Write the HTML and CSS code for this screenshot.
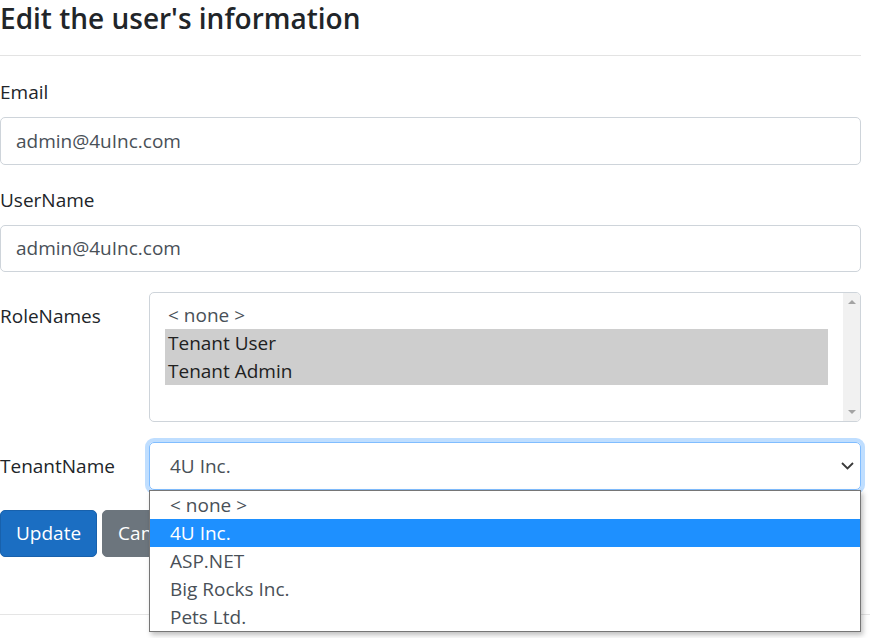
FILE: index.html
```html
<!DOCTYPE html>
<html lang="en">
<head>
<meta charset="utf-8">
<title>Edit user</title>
<link rel="stylesheet" href="styles.css">
</head>
<body>
<main class="page">
  <h4 class="title">Edit the user's information</h4>
  <hr class="rule">
  <form class="form">
    <div class="group">
      <label class="label">Email</label>
      <div class="control">admin@4uInc.com</div>
    </div>
    <div class="group">
      <label class="label">UserName</label>
      <div class="control">admin@4uInc.com</div>
    </div>
    <div class="group row">
      <label class="row-label">RoleNames</label>
      <div class="multi">
        <div class="multi-list">
          <div class="opt">&lt; none &gt;</div>
          <div class="opt sel">Tenant User</div>
          <div class="opt sel">Tenant Admin</div>
          <div class="opt"></div>
        </div>
        <div class="scrollbar">
          <span class="arrow up"></span>
          <span class="arrow down"></span>
        </div>
      </div>
    </div>
    <div class="group row">
      <label class="row-label">TenantName</label>
      <div class="select-wrap">
        <div class="select">
          <span>4U Inc.</span>
          <svg class="chev" width="13" height="8" viewBox="0 0 13 8"><polyline points="1,1 6.5,6.5 12,1" fill="none" stroke="#3a3a3a" stroke-width="1.8"/></svg>
        </div>
        <div class="dropdown">
          <div class="dopt">&lt; none &gt;</div>
          <div class="dopt active">4U Inc.</div>
          <div class="dopt">ASP.NET</div>
          <div class="dopt">Big Rocks Inc.</div>
          <div class="dopt">Pets Ltd.</div>
        </div>
      </div>
    </div>
    <div class="actions">
      <button type="button" class="btn primary">Update</button>
      <button type="button" class="btn secondary">Cancel</button>
    </div>
  </form>
</main>
<footer class="footer"></footer>
</body>
</html>
```
FILE: styles.css
```css
html, body {
  margin: 0;
  padding: 0;
  background: #ffffff;
}
body {
  font-family: "Open Sans", "Noto Sans", sans-serif;
  font-size: 19px;
  line-height: 30px;
  color: #212529;
  min-height: 638px;
  overflow: hidden;
}
.page {
  width: 861px;
}
.title {
  margin: 0;
  height: 35px;
  font-size: 28px;
  line-height: 36px;
  font-weight: 600;
  color: #212529;
}
.rule {
  margin: 20px 0 21px;
  border: 0;
  border-top: 1px solid #e3e3e3;
  height: 0;
}
.form {
  display: flex;
  flex-direction: column;
}
.group {
  margin-bottom: 20px;
}
.label {
  display: block;
  margin-bottom: 10px;
  line-height: 30px;
}
.control {
  box-sizing: border-box;
  height: 47.5px;
  border: 1px solid #ced4da;
  border-radius: 5px;
  padding: 7.5px 15px;
  line-height: 30px;
  color: #495057;
}
.row {
  display: flex;
}
.row-label {
  width: 149px;
  flex: none;
  padding-top: 8.75px;
  line-height: 30px;
}
.multi {
  flex: 1;
  display: flex;
  box-sizing: border-box;
  height: 130px;
  border: 1px solid #ced4da;
  border-radius: 5px;
  overflow: hidden;
}
.multi-list {
  flex: 1;
  padding: 7.5px 15px;
}
.opt {
  height: 28px;
  line-height: 28px;
  padding-left: 3px;
  color: #495057;
}
.opt.sel {
  background: #cecece;
  color: #212121;
}
.scrollbar {
  width: 17px;
  flex: none;
  background: #f1f1f1;
  display: flex;
  flex-direction: column;
  justify-content: space-between;
  align-items: center;
  padding: 7px 0;
}
.arrow {
  width: 0;
  height: 0;
  border-left: 4px solid transparent;
  border-right: 4px solid transparent;
}
.arrow.up {
  border-bottom: 4px solid #a3a3a3;
}
.arrow.down {
  border-top: 4px solid #a3a3a3;
}
.select-wrap {
  flex: 1;
  position: relative;
}
.select {
  box-sizing: border-box;
  height: 47.5px;
  border: 1px solid #80bdff;
  border-radius: 5px;
  box-shadow: 0 0 0 4px rgba(0, 123, 255, 0.25);
  padding: 0 6px 0 20px;
  display: flex;
  align-items: center;
  justify-content: space-between;
  color: #495057;
}
.chev {
  display: block;
}
.dropdown {
  position: absolute;
  left: 0;
  right: 0;
  top: 47.5px;
  background: #ffffff;
  border: 1px solid #767676;
  box-shadow: 2px 3px 5px rgba(0, 0, 0, 0.25);
  z-index: 5;
}
.dopt {
  height: 28px;
  line-height: 28px;
  padding-left: 20px;
  color: #495057;
}
.dopt.active {
  background: #1e90ff;
  color: #ffffff;
}
.actions {
  display: flex;
  gap: 5px;
}
.btn {
  font-family: inherit;
  font-size: 19px;
  line-height: 30px;
  height: 47.5px;
  padding: 7.5px 15px;
  border-radius: 5px;
  color: #ffffff;
  cursor: pointer;
}
.btn.primary {
  background: #1b6ec2;
  border: 1px solid #1861ac;
}
.btn.secondary {
  background: #6c757d;
  border: 1px solid #6c757d;
}
.footer {
  margin-top: 57px;
  border-top: 1px solid #e5e5e5;
  width: 100%;
}
```
